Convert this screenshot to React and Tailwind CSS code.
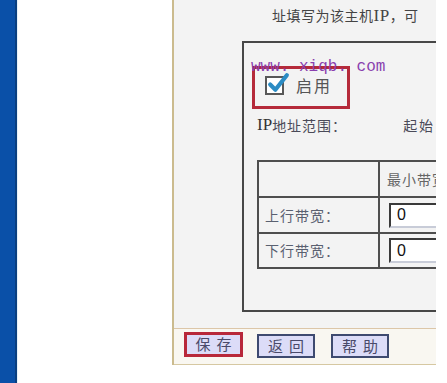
import React from "react";

const cjk = { fontFamily: '"Noto Sans CJK SC", "Noto Sans", sans-serif' };
const serif = { fontFamily: '"Liberation Serif", "Noto Sans CJK SC", serif' };

function Btn({ label, red }) {
  return (
    <div
      className={
        red
          ? "w-[59px] h-[25px] border-[3px] border-[#b8283a] bg-[#dcdcf8] flex items-center justify-center text-[15px] text-[#4a4a6a] tracking-[6px]"
          : "w-[58px] h-[24px] border-2 border-[#3e4a70] bg-[#dcdcf8] flex items-center justify-center text-[15px] text-[#4a4a6a] tracking-[6px]"
      }
      style={cjk}
    >
      <span className="pl-[6px]">{label}</span>
    </div>
  );
}

export default function App() {
  return (
    <div className="w-[447px] h-[383px] flex bg-white overflow-hidden">
      <div className="w-[15px] h-full bg-[#0a50a8] shrink-0" />
      <div className="w-[2px] h-full bg-[#0a3f80] shrink-0" />
      <div className="w-[155px] h-full bg-white border-l border-[#e6f2fb] shrink-0" />
      <div className="w-[264px] h-[365px] shrink-0 flex flex-col border-l-2 border-[#cbbb8e] overflow-hidden">
        <div className="h-[329px] bg-[#f3f3f3] border-b border-[#dcc6a8] relative overflow-hidden shrink-0">
          <div
            className="pl-[98px] pt-[5px] h-[26px] text-[14px] leading-[20px] text-[#444] tracking-[0.5px] whitespace-nowrap"
            style={cjk}
          >
            址填写为该主机<span className="text-[17px]" style={serif}>IP</span>，可
          </div>
          <div className="ml-[68px] mt-[15px] w-[320px] h-[271px] border-2 border-[#474747] relative">
            <div
              className="absolute left-[7px] top-[14px] text-[16px] leading-[20px] text-[#8a3fae] whitespace-nowrap z-10"
              style={{ fontFamily: '"Liberation Mono", monospace' }}
            >
              www. xiqb. com
            </div>
            <div className="ml-[8px] mt-[23px] w-[98px] h-[43px] border-[3px] border-[#b52a3a] flex items-start pt-[7px]">
              <div className="ml-[10px] relative w-[19px] h-[19px] border-2 border-[#585858] bg-white">
                <svg
                  className="absolute -left-[1px] -top-[6px]"
                  width="25"
                  height="23"
                  viewBox="0 0 24 22"
                >
                  <path
                    d="M4 12 L9 17 L20 3"
                    fill="none"
                    stroke="#2b8cc4"
                    strokeWidth="4"
                    strokeLinecap="round"
                    strokeLinejoin="round"
                  />
                </svg>
              </div>
              <div className="ml-[12px] -mt-[1px] text-[16px] leading-[20px] text-[#555] tracking-[2px]" style={cjk}>
                启用
              </div>
            </div>
            <div className="ml-[13px] mt-[6px] h-[20px] flex items-center whitespace-nowrap text-[14px] text-[#4a4a58]" style={cjk}>
              <span className="text-[17px] text-[#333]" style={serif}>IP</span>
              <span className="tracking-[1px]">地址范围：</span>
              <span className="ml-[56px] tracking-[2px]">起始</span>
            </div>
            <div className="ml-[13px] mt-[25px] w-[290px] border-2 border-[#4e4e4e] flex flex-col">
              <div className="h-[34px] flex">
                <div className="w-[119px] shrink-0" />
                <div
                  className="flex-1 border-l-2 border-[#4e4e4e] pl-[7px] flex items-center text-[14px] text-[#666] tracking-[1px] whitespace-nowrap"
                  style={cjk}
                >
                  最小带宽
                </div>
              </div>
              <div className="h-[36px] flex border-t-2 border-[#4e4e4e]">
                <div className="w-[119px] shrink-0 pl-[6px] flex items-center text-[14px] text-[#5a6070] tracking-[1px]" style={cjk}>
                  上行带宽：
                </div>
                <div className="flex-1 border-l-2 border-[#4e4e4e] pl-[9px] flex items-center">
                  <div
                    className="w-[150px] h-[25px] bg-white border-2 border-t-[#3a3a3a] border-l-[#3a3a3a] border-b-[#c8ccd8] border-r-[#c8ccd8] pl-[6px] flex items-center text-[16px] text-[#111]"
                    style={{ fontFamily: '"Liberation Sans", sans-serif' }}
                  >
                    0
                  </div>
                </div>
              </div>
              <div className="h-[35px] flex border-t-2 border-[#4e4e4e]">
                <div className="w-[119px] shrink-0 pl-[6px] flex items-center text-[14px] text-[#5a6070] tracking-[1px]" style={cjk}>
                  下行带宽：
                </div>
                <div className="flex-1 border-l-2 border-[#4e4e4e] pl-[9px] flex items-center">
                  <div
                    className="w-[150px] h-[25px] bg-white border-2 border-t-[#3a3a3a] border-l-[#3a3a3a] border-b-[#c8ccd8] border-r-[#c8ccd8] pl-[6px] flex items-center text-[16px] text-[#111]"
                    style={{ fontFamily: '"Liberation Sans", sans-serif' }}
                  >
                    0
                  </div>
                </div>
              </div>
            </div>
          </div>
        </div>
        <div className="h-[36px] bg-[#f9f7f1] border-b border-[#d6c8a2] flex items-start shrink-0">
          <div className="ml-[10px] mt-[3px]">
            <Btn label="保存" red />
          </div>
          <div className="ml-[14px] mt-[5px]">
            <Btn label="返回" />
          </div>
          <div className="ml-[16px] mt-[5px]">
            <Btn label="帮助" />
          </div>
        </div>
      </div>
      <div className="flex-1 bg-white" />
    </div>
  );
}
